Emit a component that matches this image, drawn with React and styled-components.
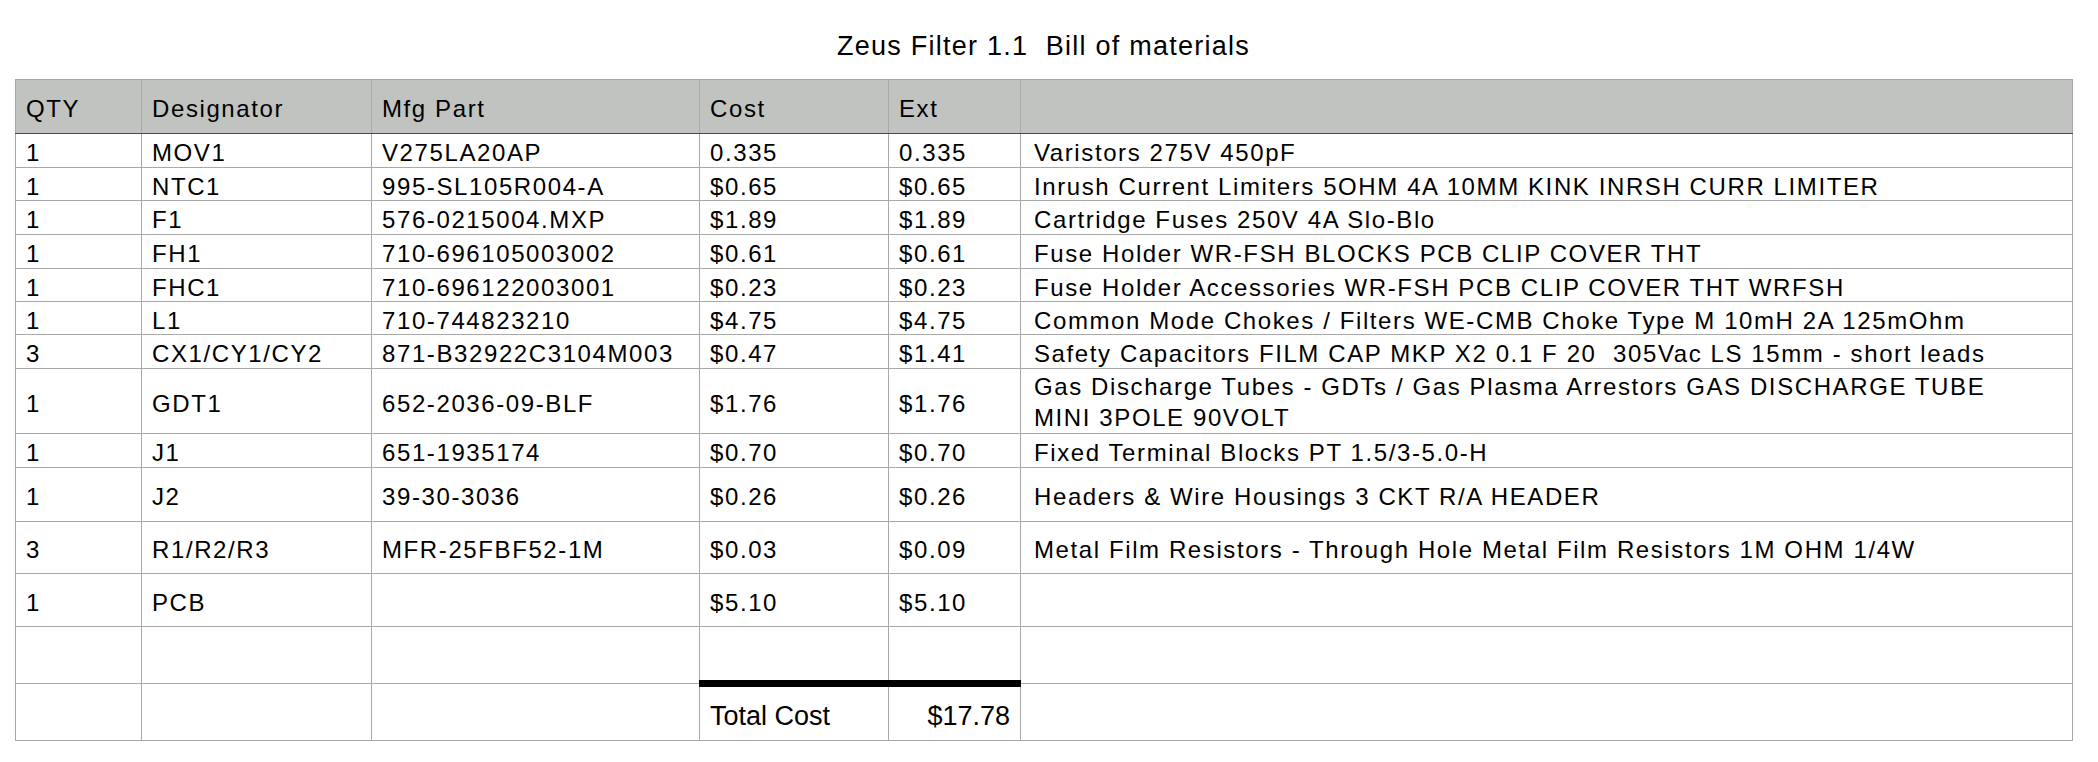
import React from "react";
import styled, { createGlobalStyle } from "styled-components";

const GlobalStyle = createGlobalStyle`
  body {
    margin: 0;
    background: #fff;
    color: #000;
    font-family: "Liberation Sans", Arial, Helvetica, sans-serif;
  }
`;

const COLS = [126, 230, 328, 189, 132, 1052];
const HEAD = ["QTY", "Designator", "Mfg Part", "Cost", "Ext", ""];

const ITEMS = [
  ["1", "MOV1", "V275LA20AP", "0.335", "0.335", "Varistors 275V 450pF", 34],
  ["1", "NTC1", "995-SL105R004-A", "$0.65", "$0.65", "Inrush Current Limiters 5OHM 4A 10MM KINK INRSH CURR LIMITER", 33],
  ["1", "F1", "576-0215004.MXP", "$1.89", "$1.89", "Cartridge Fuses 250V 4A Slo-Blo", 34],
  ["1", "FH1", "710-696105003002", "$0.61", "$0.61", "Fuse Holder WR-FSH BLOCKS PCB CLIP COVER THT", 34],
  ["1", "FHC1", "710-696122003001", "$0.23", "$0.23", "Fuse Holder Accessories WR-FSH PCB CLIP COVER THT WRFSH", 33],
  ["1", "L1", "710-744823210", "$4.75", "$4.75", "Common Mode Chokes / Filters WE-CMB Choke Type M 10mH 2A 125mOhm", 33],
  ["3", "CX1/CY1/CY2", "871-B32922C3104M003", "$0.47", "$1.41", "Safety Capacitors FILM CAP MKP X2 0.1 F 20\u00a0 305Vac LS 15mm - short leads", 34],
  ["1", "GDT1", "652-2036-09-BLF", "$1.76", "$1.76", ["Gas Discharge Tubes - GDTs / Gas Plasma Arrestors GAS DISCHARGE TUBE", "MINI 3POLE 90VOLT"], 65],
  ["1", "J1", "651-1935174", "$0.70", "$0.70", "Fixed Terminal Blocks PT 1.5/3-5.0-H", 34],
  ["1", "J2", "39-30-3036", "$0.26", "$0.26", "Headers & Wire Housings 3 CKT R/A HEADER", 54],
  ["3", "R1/R2/R3", "MFR-25FBF52-1M", "$0.03", "$0.09", "Metal Film Resistors - Through Hole Metal Film Resistors 1M OHM 1/4W", 52],
  ["1", "PCB", "", "$5.10", "$5.10", "", 53],
];

const Page = styled.div`
  padding: 31px 0 0 15px;
`;

const Sheet = styled.div`
  width: 2057px;
`;

const Title = styled.h1`
  margin: 0 0 17px;
  font-size: 27px;
  line-height: 31px;
  font-weight: normal;
  letter-spacing: 1.25px;
  text-align: center;
  white-space: pre;
`;

const Table = styled.table`
  width: 2057px;
  border-collapse: collapse;
  table-layout: fixed;
  font-size: 24px;
  letter-spacing: 1.6px;
`;

const Row = styled.tr`
  height: ${(p) => p.$h}px;
`;

const HeadCell = styled.th`
  padding: 5px 10px 0;
  background: #c1c3c1;
  border: 1px solid #a9a9a9;
  border-bottom: 1px solid #4a4a4a;
  font-weight: normal;
  text-align: left;
  line-height: 24px;
  vertical-align: middle;
`;

const Cell = styled.td`
  padding: ${(p) => (p.$lines ? "2px" : "5px")} ${(p) => (p.$wide ? "13px" : "10px")} 0;
  border: 1px solid #a9a9a9;
  border-top: ${(p) => (p.$rule ? "7px solid #000" : "1px solid #a9a9a9")};
  line-height: ${(p) => (p.$lines ? "31px" : "24px")};
  vertical-align: middle;
  white-space: nowrap;
  overflow: hidden;
`;

const TotalText = styled.span`
  display: block;
  font-size: 27px;
  letter-spacing: 0;
  line-height: 28px;
  text-align: ${(p) => p.$align || "left"};
`;

export default function App() {
  return (
    <Page>
      <GlobalStyle />
      <Sheet>
        <Title>{"Zeus Filter 1.1  Bill of materials"}</Title>
        <Table>
          <colgroup>
            {COLS.map((w, i) => (
              <col key={i} style={{ width: w }} />
            ))}
          </colgroup>
          <thead>
            <Row $h={54}>
              {HEAD.map((h, i) => (
                <HeadCell key={i}>{h}</HeadCell>
              ))}
            </Row>
          </thead>
          <tbody>
            {ITEMS.map((r, i) => {
              const multi = Array.isArray(r[5]);
              return (
                <Row key={i} $h={r[6]}>
                  <Cell>{r[0]}</Cell>
                  <Cell>{r[1]}</Cell>
                  <Cell>{r[2]}</Cell>
                  <Cell>{r[3]}</Cell>
                  <Cell>{r[4]}</Cell>
                  <Cell $wide $lines={multi}>
                    {multi ? (
                      <>
                        {r[5][0]}
                        <br />
                        {r[5][1]}
                      </>
                    ) : (
                      r[5]
                    )}
                  </Cell>
                </Row>
              );
            })}
            <Row $h={57}>
              <Cell />
              <Cell />
              <Cell />
              <Cell />
              <Cell />
              <Cell $wide />
            </Row>
            <Row $h={57}>
              <Cell />
              <Cell />
              <Cell />
              <Cell $rule>
                <TotalText>Total Cost</TotalText>
              </Cell>
              <Cell $rule>
                <TotalText $align="right">$17.78</TotalText>
              </Cell>
              <Cell $wide />
            </Row>
          </tbody>
        </Table>
      </Sheet>
    </Page>
  );
}
